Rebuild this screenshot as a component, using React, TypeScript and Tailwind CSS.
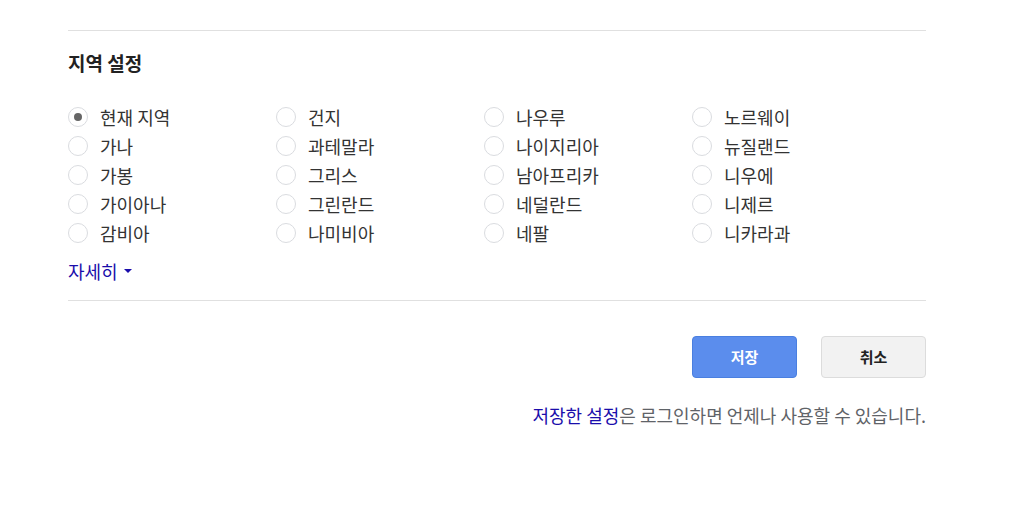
const regions: string[][] = [
  ["현재 지역", "가나", "가봉", "가이아나", "감비아"],
  ["건지", "과테말라", "그리스", "그린란드", "나미비아"],
  ["나우루", "나이지리아", "남아프리카", "네덜란드", "네팔"],
  ["노르웨이", "뉴질랜드", "니우에", "니제르", "니카라과"],
];

function Radio({ label, checked }: { label: string; checked?: boolean }) {
  return (
    <label className="flex h-[29px] items-center gap-3 cursor-pointer">
      <span className="flex h-5 w-5 shrink-0 items-center justify-center rounded-full border border-[#dadce0] bg-white">
        {checked && <span className="h-2 w-2 rounded-full bg-[#666]" />}
      </span>
      <span className="text-[18px] leading-6 text-[#333]">{label}</span>
    </label>
  );
}

export default function App() {
  return (
    <div
      className="min-h-[514px] bg-white pt-[30px]"
      style={{ fontFamily: '"Noto Sans CJK KR", "Noto Sans", sans-serif' }}
    >
      <div className="ml-[68px] w-[858px]">
        <div className="border-t border-[#e0e0e0]" />

        <h2 className="mt-[20px] text-[19px] font-bold leading-6 text-[#222]">지역 설정</h2>

        <div className="mt-[27px] grid grid-cols-[208px_208px_208px_208px]">
          {regions.map((col, i) => (
            <div key={i} className="flex flex-col">
              {col.map((r) => (
                <Radio key={r} label={r} checked={r === "현재 지역"} />
              ))}
            </div>
          ))}
        </div>

        <button className="mt-[12px] flex items-center gap-1.5 text-[18px] leading-6 text-[#1a0dab]">
          자세히
          <svg width="8" height="4" viewBox="0 0 8 4">
            <path d="M0 0h8L4 4z" fill="#1a0dab" />
          </svg>
        </button>

        <div className="mt-[17px] border-t border-[#e0e0e0]" />

        <div className="mt-[35px] flex justify-end gap-6">
          <button className="h-[42px] w-[105px] rounded-sm border border-[#4a7fe0] bg-[#5b8ded] text-[15px] font-bold text-white">
            저장
          </button>
          <button className="h-[42px] w-[105px] rounded-sm border border-[#dcdcdc] bg-[#f2f2f2] text-[15px] font-bold text-[#222]">
            취소
          </button>
        </div>

        <p className="mt-[25px] text-right text-[18px] leading-6 text-[#5f6368]">
          <a className="text-[#1a0dab]">저장한 설정</a>은 로그인하면 언제나 사용할 수 있습니다.
        </p>
      </div>
    </div>
  );
}
